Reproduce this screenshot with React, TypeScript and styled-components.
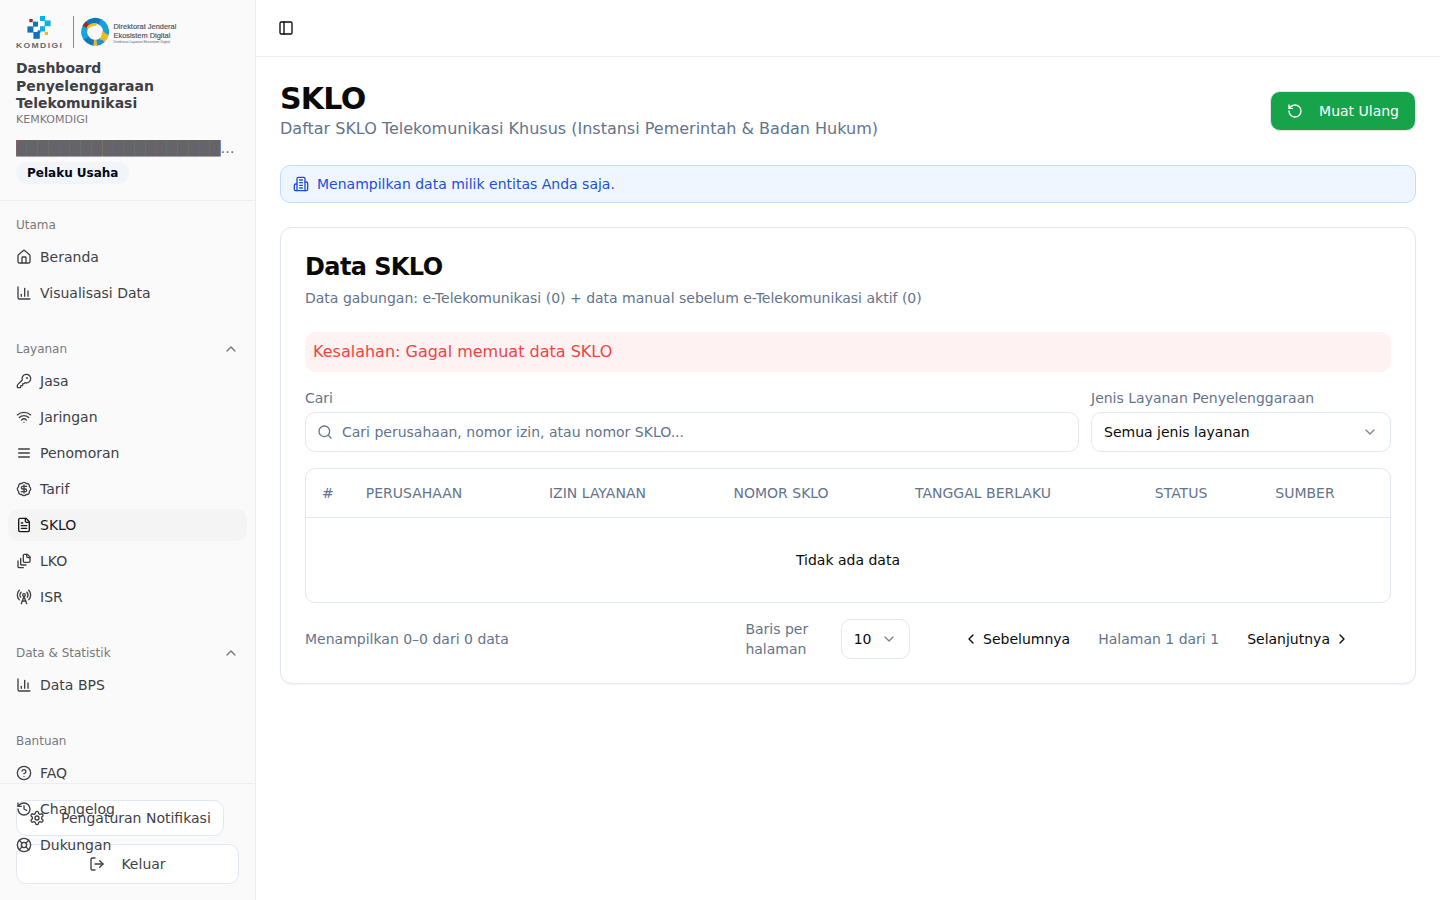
import React from "react";
import styled, { createGlobalStyle, css } from "styled-components";

const GlobalStyle = createGlobalStyle`
  *, *::before, *::after { box-sizing: border-box; }
  body {
    margin: 0;
    background: #fff;
    color: #0a0a0a;
    font-family: "DejaVu Sans", sans-serif;
    font-size: 14px;
    line-height: 20px;
  }
  h1, h2, p { margin: 0; }
  button, input { font: inherit; color: inherit; }
`;

/* ---------- icons ---------- */

const shapes = {
  home: ["M15 21v-8a1 1 0 0 0-1-1h-4a1 1 0 0 0-1 1v8", "M3 10a2 2 0 0 1 .709-1.528l7-5.999a2 2 0 0 1 2.582 0l7 5.999A2 2 0 0 1 21 10v9a2 2 0 0 1-2 2H5a2 2 0 0 1-2-2z"],
  chart: ["M3 3v16a2 2 0 0 0 2 2h16", "M18 17V9", "M13 17V5", "M8 17v-3"],
  key: ["M2.586 17.414A2 2 0 0 0 2 18.828V21a1 1 0 0 0 1 1h3a1 1 0 0 0 1-1v-1a1 1 0 0 1 1-1h1a1 1 0 0 0 1-1v-1a1 1 0 0 1 1-1h.172a2 2 0 0 0 1.414-.586l.814-.814a6.5 6.5 0 1 0-4-4z", "M16.5 7a.5.5 0 1 0 0 1 .5.5 0 1 0 0-1"],
  wifi: ["M12 20h.01", "M2 8.82a15 15 0 0 1 20 0", "M5 12.859a10 10 0 0 1 14 0", "M8.5 16.429a5 5 0 0 1 7 0"],
  menu: ["M4 6h16", "M4 12h16", "M4 18h16"],
  dollar: ["M3.85 8.62a4 4 0 0 1 4.78-4.77 4 4 0 0 1 6.74 0 4 4 0 0 1 4.78 4.78 4 4 0 0 1 0 6.74 4 4 0 0 1-4.77 4.78 4 4 0 0 1-6.75 0 4 4 0 0 1-4.78-4.77 4 4 0 0 1 0-6.76Z", "M16 8h-6a2 2 0 1 0 0 4h4a2 2 0 1 1 0 4H8", "M12 18V6"],
  file: ["M15 2H6a2 2 0 0 0-2 2v16a2 2 0 0 0 2 2h12a2 2 0 0 0 2-2V7Z", "M14 2v4a2 2 0 0 0 2 2h4", "M10 9H8", "M16 13H8", "M16 17H8"],
  stack: ["M21 7h-3a2 2 0 0 1-2-2V2", "M21 6v6.5c0 .8-.7 1.5-1.5 1.5h-7c-.8 0-1.5-.7-1.5-1.5v-9c0-.8.7-1.5 1.5-1.5H17Z", "M7 8v8.8c0 .3.2.6.4.8.2.2.5.4.8.4H15", "M3 12v8.8c0 .3.2.6.4.8.2.2.5.4.8.4H11"],
  tower: ["M4.9 16.1C1 12.2 1 5.8 4.9 1.9", "M7.8 4.7a6.14 6.14 0 0 0-.8 7.5", "M14 9a2 2 0 1 1-4 0 2 2 0 0 1 4 0", "M16.2 4.8c2 2 2.26 5.11.8 7.47", "M19.1 1.9a9.96 9.96 0 0 1 0 14.1", "M9.5 18h5", "m8 22 4-11 4 11"],
  help: ["M22 12a10 10 0 1 1-20 0 10 10 0 0 1 20 0", "M9.09 9a3 3 0 0 1 5.83 1c0 2-3 3-3 3", "M12 17h.01"],
  history: ["M3 12a9 9 0 1 0 9-9 9.75 9.75 0 0 0-6.74 2.74L3 8", "M3 3v5h5", "M12 7v5l4 2"],
  buoy: ["M22 12a10 10 0 1 1-20 0 10 10 0 0 1 20 0", "m4.93 4.93 4.24 4.24", "m14.83 9.17 4.24-4.24", "m14.83 14.83 4.24 4.24", "m9.17 14.83-4.24 4.24", "M16 12a4 4 0 1 1-8 0 4 4 0 0 1 8 0"],
  settings: ["M12.22 2h-.44a2 2 0 0 0-2 2v.18a2 2 0 0 1-1 1.73l-.43.25a2 2 0 0 1-2 0l-.15-.08a2 2 0 0 0-2.73.73l-.22.38a2 2 0 0 0 .73 2.73l.15.1a2 2 0 0 1 1 1.72v.51a2 2 0 0 1-1 1.74l-.15.09a2 2 0 0 0-.73 2.73l.22.38a2 2 0 0 0 2.73.73l.15-.08a2 2 0 0 1 2 0l.43.25a2 2 0 0 1 1 1.73V20a2 2 0 0 0 2 2h.44a2 2 0 0 0 2-2v-.18a2 2 0 0 1 1-1.73l.43-.25a2 2 0 0 1 2 0l.15.08a2 2 0 0 0 2.73-.73l.22-.39a2 2 0 0 0-.73-2.73l-.15-.08a2 2 0 0 1-1-1.74v-.5a2 2 0 0 1 1-1.74l.15-.09a2 2 0 0 0 .73-2.73l-.22-.38a2 2 0 0 0-2.73-.73l-.15.08a2 2 0 0 1-2 0l-.43-.25a2 2 0 0 1-1-1.73V4a2 2 0 0 0-2-2z", "M15 12a3 3 0 1 1-6 0 3 3 0 0 1 6 0"],
  logout: ["M9 21H5a2 2 0 0 1-2-2V5a2 2 0 0 1 2-2h4", "m16 17 5-5-5-5", "M21 12H9"],
  reload: ["M3 12a9 9 0 1 0 9-9 9.75 9.75 0 0 0-6.74 2.74L3 8", "M3 3v5h5"],
  building: ["M6 22V4a2 2 0 0 1 2-2h8a2 2 0 0 1 2 2v18Z", "M6 12H4a2 2 0 0 0-2 2v6a2 2 0 0 0 2 2h2", "M18 9h2a2 2 0 0 1 2 2v9a2 2 0 0 1-2 2h-2", "M10 6h4", "M10 10h4", "M10 14h4", "M10 18h4"],
  panel: ["M5 3h14a2 2 0 0 1 2 2v14a2 2 0 0 1-2 2H5a2 2 0 0 1-2-2V5a2 2 0 0 1 2-2z", "M9 3v18"],
  search: ["M19 11a8 8 0 1 1-16 0 8 8 0 0 1 16 0", "m21 21-4.3-4.3"],
  up: ["m18 15-6-6-6 6"],
  down: ["m6 9 6 6 6-6"],
  left: ["m15 18-6-6 6-6"],
  right: ["m9 18 6-6-6-6"],
};

type IconName = keyof typeof shapes;

const IconSvg = styled.svg<{ $faded?: boolean }>`
  width: 16px;
  height: 16px;
  flex: none;
  fill: none;
  stroke: currentColor;
  stroke-width: 2;
  stroke-linecap: round;
  stroke-linejoin: round;
  opacity: ${(p) => (p.$faded ? 0.5 : 1)};
`;

function Icon({ name, faded }: { name: IconName; faded?: boolean }) {
  return (
    <IconSvg viewBox="0 0 24 24" $faded={faded} aria-hidden="true">
      {shapes[name].map((d) => (
        <path key={d} d={d} />
      ))}
    </IconSvg>
  );
}

/* ---------- logo ---------- */

const LogoSvg = styled.svg`
  display: block;
  width: 162px;
  height: 32px;
  overflow: visible;
  font-family: "Liberation Sans", sans-serif;
`;

/* Ring segments: start angle, end angle (clockwise from east), colour. */
const ringSegments: [number, number, string][] = [
  [225, 300, "#0f78b8"],
  [295, 375, "#1b9fd8"],
  [12, 50, "#f0bb20"],
  [48, 84, "#1a94cf"],
  [82, 100, "#e9b927"],
  [98, 150, "#1378b4"],
  [145, 207, "#18a5dc"],
  [205, 228, "#a3242b"],
];

function arc(from: number, to: number, radius: number) {
  const point = (deg: number) => {
    const rad = (deg * Math.PI) / 180;
    return `${(79.2 + radius * Math.cos(rad)).toFixed(2)} ${(15.8 + radius * Math.sin(rad)).toFixed(2)}`;
  };
  return `M${point(from)}A${radius} ${radius} 0 0 1 ${point(to)}`;
}

function Logo() {
  return (
    <LogoSvg viewBox="0 0 162 32" role="img" aria-label="Komdigi">
      <rect x="13.3" y="3" width="3.4" height="3.2" fill="#a3242b" />
      <rect x="24" y="0" width="5" height="5" fill="#12aee6" />
      <rect x="28.6" y="4.4" width="6" height="5.8" fill="#12aee6" />
      <rect x="17" y="5.6" width="5" height="5" fill="#1273b8" />
      <rect x="11.4" y="10.4" width="6" height="6.2" fill="#1273b8" />
      <rect x="24" y="10.2" width="5" height="5.3" fill="#12aee6" />
      <rect x="17.4" y="16" width="6.4" height="6.8" fill="#1273b8" />
      <rect x="21.6" y="14.4" width="2.8" height="2.6" fill="#1273b8" />
      <rect x="28.8" y="15.8" width="3.2" height="3.2" fill="#f2b91d" />
      <text x="0" y="31.6" fontSize="8" fontWeight="700" fill="#67686c" letterSpacing="1.25" textLength="47.2" lengthAdjust="spacingAndGlyphs">
        KOMDIGI
      </text>
      <rect x="57" y="0" width="1" height="32" fill="#8a8b8e" />
      {ringSegments.map(([from, to, color]) => (
        <path key={from} d={arc(from, to, 11)} fill="none" stroke={color} strokeWidth="6" />
      ))}
      <path d="M70.800 11.300c2-3.400 6-4.700 10.400-4.100l-1.200 2.700c-3.400-.400-6.200.800-8.200 3.600Z" fill="#f0bb20" />
      <path d="M86.500 14.500l3.200 3.200-2.700 5.500-3 1Z" fill="#f0bb20" />
      <text x="97.500" y="13.400" fontSize="7.200" fill="#4f5054" stroke="#4f5054" strokeWidth="0.15" textLength="62.800" lengthAdjust="spacingAndGlyphs">
        Direktorat Jenderal
      </text>
      <text x="97.500" y="21.700" fontSize="7.200" fill="#4f5054" stroke="#4f5054" strokeWidth="0.15" textLength="56.800" lengthAdjust="spacingAndGlyphs">
        Ekosistem Digital
      </text>
      <text x="97.500" y="27" fontSize="3.400" fill="#606165" textLength="56.500" lengthAdjust="spacingAndGlyphs">
        Direktorat Layanan Ekosistem Digital
      </text>
    </LogoSvg>
  );
}

/* ---------- sidebar ---------- */

const Shell = styled.div`
  display: flex;
  height: 100vh;
  overflow: hidden;
`;

const Sidebar = styled.aside`
  display: flex;
  flex-direction: column;
  flex: none;
  width: 256px;
  height: 100%;
  background: #fafafa;
  border-right: 1px solid #ededef;
  color: #3f3f46;
`;

const SidebarHeader = styled.header`
  flex: none;
  height: 201px;
  padding: 16px;
  border-bottom: 1px solid #ededef;
`;

const Brand = styled.p`
  width: 170px;
  margin-top: 12px;
  font-weight: 700;
  line-height: 17.5px;
`;

const Ministry = styled.p`
  font-size: 11px;
  line-height: 14px;
  opacity: 0.7;
`;

const Entity = styled.p`
  margin-top: 11.5px;
  overflow: hidden;
  text-overflow: ellipsis;
  white-space: nowrap;
  opacity: 0.8;
`;

const Role = styled.span`
  display: inline-block;
  margin-top: 4px;
  padding: 3px 11px;
  border-radius: 11px;
  background: #f1f5f9;
  color: #020817;
  font-size: 12px;
  font-weight: 700;
  line-height: 16px;
`;

const Nav = styled.nav`
  position: relative;
  z-index: 1;
  display: flex;
  flex: 1;
  flex-direction: column;
  gap: 8px;
  min-height: 0;
`;

const Group = styled.section`
  flex: none;
  padding: 8px;
`;

const GroupLabel = styled.div`
  display: flex;
  align-items: center;
  justify-content: space-between;
  height: 32px;
  padding: 0 8px;
  font-size: 12px;
  line-height: 16px;
  opacity: 0.7;
`;

const Items = styled.div`
  display: flex;
  flex-direction: column;
  gap: 4px;
`;

const Item = styled.a<{ $active?: boolean }>`
  display: flex;
  align-items: center;
  gap: 8px;
  height: 32px;
  padding: 0 8px;
  border-radius: 10px;
  ${(p) =>
    p.$active &&
    css`
      background: #f4f4f5;
      color: #18181b;
    `}
`;

const SidebarFooter = styled.footer`
  display: flex;
  flex: none;
  flex-direction: column;
  align-items: flex-start;
  gap: 8px;
  padding: 16px;
  border-top: 1px solid #ededef;
`;

const Button = styled.button<{ $tone?: "green"; $small?: boolean; $wide?: boolean }>`
  display: inline-flex;
  align-items: center;
  justify-content: center;
  gap: 16px;
  flex: none;
  width: ${(p) => (p.$wide ? "100%" : "auto")};
  height: ${(p) => (p.$small ? 36 : 40)}px;
  padding: 0 ${(p) => (p.$small ? 12 : 16)}px;
  border: 1px solid #e2e8f0;
  border-radius: 10px;
  background: ${(p) => (p.$tone ? "#16a34a" : "#fff")};
  color: ${(p) => (p.$tone ? "#fff" : "inherit")};
  white-space: nowrap;
`;

/* ---------- main ---------- */

const Main = styled.main`
  flex: 1;
  min-width: 0;
`;

const TopBar = styled.div`
  display: flex;
  align-items: center;
  height: 57px;
  padding: 0 22px;
  border-bottom: 1px solid #ededef;
`;

const Page = styled.div`
  display: flex;
  flex-direction: column;
  gap: 24px;
  padding: 24px;
`;

const PageHead = styled.div`
  display: flex;
  align-items: center;
  justify-content: space-between;
`;

const Title = styled.h1`
  font-size: 30px;
  font-weight: 700;
  line-height: 36px;
  letter-spacing: -0.75px;
`;

const Subtitle = styled.p`
  color: #64748b;
  font-size: 16px;
  line-height: 24px;
`;

const Notice = styled.div`
  display: flex;
  align-items: center;
  gap: 8px;
  height: 38px;
  padding: 0 12px;
  border: 1px solid #bfdbfe;
  border-radius: 10px;
  background: #eff6ff;
  color: #1d4ed8;
`;

const Card = styled.section`
  padding: 24px;
  border: 1px solid #e2e8f0;
  border-radius: 12px;
  background: #fff;
  box-shadow: 0 1px 2px rgba(0, 0, 0, 0.05);
`;

const CardTitle = styled.h2`
  font-size: 24px;
  font-weight: 700;
  line-height: 30px;
  letter-spacing: -0.6px;
`;

const CardText = styled.p`
  margin-top: 6px;
  color: #64748b;
`;

const ErrorBox = styled.div`
  margin-top: 24px;
  padding: 8px;
  border-radius: 10px;
  background: #fef2f2;
  color: #ef4444;
  font-size: 16px;
  line-height: 24px;
`;

const Filters = styled.div`
  display: grid;
  grid-template-columns: 1fr 300px;
  gap: 12px;
  margin: 16px 0;
`;

const Field = styled.label`
  display: flex;
  flex-direction: column;
  gap: 4px;
  color: #64748b;
`;

const Control = styled.div<{ $width?: number }>`
  display: flex;
  align-items: center;
  justify-content: space-between;
  gap: 9px;
  width: ${(p) => (p.$width ? `${p.$width}px` : "auto")};
  height: 40px;
  padding: 0 12px;
  border: 1px solid #e2e8f0;
  border-radius: 10px;
  background: #fff;
  color: #0a0a0a;
`;

const SearchControl = styled(Control)`
  padding: 0 11px;
  color: #64748b;
`;

const SearchInput = styled.input`
  flex: 1;
  min-width: 0;
  padding: 0;
  border: 0;
  outline: 0;
  background: transparent;
  &::placeholder {
    color: #64748b;
    opacity: 1;
  }
`;

const TableFrame = styled.div`
  border: 1px solid #e2e8f0;
  border-radius: 10px;
  overflow: hidden;
`;

const Table = styled.table`
  width: 100%;
  table-layout: fixed;
  border-spacing: 0;
`;

const HeadCell = styled.th<{ $width: number }>`
  width: ${(p) => p.$width}px;
  height: 49px;
  padding: 0 16px;
  border-bottom: 1px solid #e2e8f0;
  color: #64748b;
  font-weight: 400;
  text-align: left;
  white-space: nowrap;
`;

const EmptyCell = styled.td`
  height: 84px;
  padding: 0;
  text-align: center;
`;

const Pagination = styled.div`
  display: flex;
  align-items: center;
  gap: 12px;
  margin-top: 16px;
  color: #64748b;
`;

const Summary = styled.span`
  flex: 1;
`;

const RowsLabel = styled.span`
  width: 83.3px;
`;

const Pager = styled.div`
  display: flex;
  align-items: center;
  justify-content: center;
  gap: 12px;
  width: 469px;
  white-space: nowrap;
`;

const PageLink = styled.a<{ $next?: boolean }>`
  display: flex;
  align-items: center;
  gap: 4px;
  padding: ${(p) => (p.$next ? "0 10px 0 16px" : "0 16px 0 10px")};
  color: #0a0a0a;
`;

type NavGroup = { label: string; fold?: boolean; items: [IconName, string][] };

const groups: NavGroup[] = [
  { label: "Utama", items: [["home", "Beranda"], ["chart", "Visualisasi Data"]] },
  {
    label: "Layanan",
    fold: true,
    items: [
      ["key", "Jasa"],
      ["wifi", "Jaringan"],
      ["menu", "Penomoran"],
      ["dollar", "Tarif"],
      ["file", "SKLO"],
      ["stack", "LKO"],
      ["tower", "ISR"],
    ],
  },
  { label: "Data & Statistik", fold: true, items: [["chart", "Data BPS"]] },
  { label: "Bantuan", items: [["help", "FAQ"], ["history", "Changelog"], ["buoy", "Dukungan"]] },
];

const columns: [string, number][] = [
  ["#", 43.8],
  ["PERUSAHAAN", 183.2],
  ["IZIN LAYANAN", 184.5],
  ["NOMOR SKLO", 181.5],
  ["TANGGAL BERLAKU", 239.8],
  ["STATUS", 120.5],
  ["SUMBER", 130.7],
];

export default function App() {
  return (
    <Shell>
      <GlobalStyle />
      <Sidebar>
        <SidebarHeader>
          <Logo />
          <Brand>Dashboard Penyelenggaraan Telekomunikasi</Brand>
          <Ministry>KEMKOMDIGI</Ministry>
          <Entity>{"█".repeat(28)}</Entity>
          <Role>Pelaku Usaha</Role>
        </SidebarHeader>
        <Nav>
          {groups.map((group) => (
            <Group key={group.label}>
              <GroupLabel>
                {group.label}
                {group.fold && <Icon name="up" />}
              </GroupLabel>
              <Items>
                {group.items.map(([icon, label]) => (
                  <Item key={label} $active={label === "SKLO"}>
                    <Icon name={icon} />
                    {label}
                  </Item>
                ))}
              </Items>
            </Group>
          ))}
        </Nav>
        <SidebarFooter>
          <Button $small>
            <Icon name="settings" />
            Pengaturan Notifikasi
          </Button>
          <Button $wide>
            <Icon name="logout" />
            Keluar
          </Button>
        </SidebarFooter>
      </Sidebar>
      <Main>
        <TopBar>
          <Icon name="panel" />
        </TopBar>
        <Page>
          <PageHead>
            <div>
              <Title>SKLO</Title>
              <Subtitle>Daftar SKLO Telekomunikasi Khusus (Instansi Pemerintah &amp; Badan Hukum)</Subtitle>
            </div>
            <Button $tone="green">
              <Icon name="reload" />
              Muat Ulang
            </Button>
          </PageHead>
          <Notice>
            <Icon name="building" />
            Menampilkan data milik entitas Anda saja.
          </Notice>
          <Card>
            <CardTitle>Data SKLO</CardTitle>
            <CardText>Data gabungan: e-Telekomunikasi (0) + data manual sebelum e-Telekomunikasi aktif (0)</CardText>
            <ErrorBox>Kesalahan: Gagal memuat data SKLO</ErrorBox>
            <Filters>
              <Field>
                Cari
                <SearchControl>
                  <Icon name="search" />
                  <SearchInput placeholder="Cari perusahaan, nomor izin, atau nomor SKLO..." />
                </SearchControl>
              </Field>
              <Field as="div">
                Jenis Layanan Penyelenggaraan
                <Control>
                  Semua jenis layanan
                  <Icon name="down" faded />
                </Control>
              </Field>
            </Filters>
            <TableFrame>
              <Table>
                <thead>
                  <tr>
                    {columns.map(([label, width]) => (
                      <HeadCell key={label} $width={width}>
                        {label}
                      </HeadCell>
                    ))}
                  </tr>
                </thead>
                <tbody>
                  <tr>
                    <EmptyCell colSpan={columns.length}>Tidak ada data</EmptyCell>
                  </tr>
                </tbody>
              </Table>
            </TableFrame>
            <Pagination>
              <Summary>Menampilkan 0–0 dari 0 data</Summary>
              <RowsLabel>Baris per halaman</RowsLabel>
              <Control $width={69.3}>
                10
                <Icon name="down" faded />
              </Control>
              <Pager>
                <PageLink>
                  <Icon name="left" />
                  Sebelumnya
                </PageLink>
                <span>Halaman 1 dari 1</span>
                <PageLink $next>
                  Selanjutnya
                  <Icon name="right" />
                </PageLink>
              </Pager>
            </Pagination>
          </Card>
        </Page>
      </Main>
    </Shell>
  );
}
